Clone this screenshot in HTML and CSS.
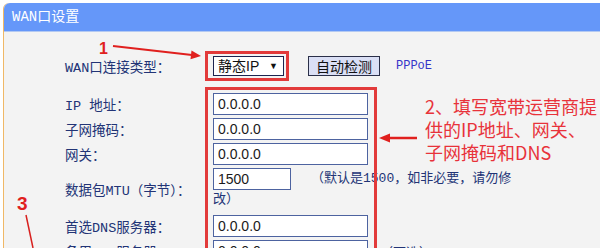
FILE: index.html
```html
<!DOCTYPE html>
<html lang="zh-CN">
<head>
    <meta charset="UTF-8">
    <title>WAN口设置</title>
    <link rel="stylesheet" href="styles.css">
</head>
<body>
    <div class="page">
        <div class="panel">
            <div class="panel-head">WAN口设置</div>
            <div class="panel-body">
                <div class="row row-type">
                    <label>WAN口连接类型：</label>
                    <div class="field">
                        <div class="select">静态IP<span class="caret">▼</span></div>
                        <button class="btn">自动检测</button>
                        <span class="link">PPPoE</span>
                    </div>
                </div>
                <div class="row">
                    <label>IP 地址：</label>
                    <div class="field"><input class="txt" value="0.0.0.0"></div>
                </div>
                <div class="row">
                    <label>子网掩码：</label>
                    <div class="field"><input class="txt" value="0.0.0.0"></div>
                </div>
                <div class="row">
                    <label>网关：</label>
                    <div class="field"><input class="txt" value="0.0.0.0"></div>
                </div>
                <div class="row row-mtu">
                    <label>数据包MTU（字节）：</label>
                    <div class="field-text">
                        <input class="txt short" value="1500"><span class="hint">（默认是1500，如非必要，请勿修改）</span>
                    </div>
                </div>
                <div class="row">
                    <label>首选DNS服务器：</label>
                    <div class="field"><input class="txt" value="0.0.0.0"></div>
                </div>
                <div class="row">
                    <label>备用DNS服务器：</label>
                    <div class="field"><input class="txt" value="0.0.0.0"><span class="hint opt">（可选）</span></div>
                </div>
            </div>
        </div>

        <!-- 标注层 -->
        <svg class="marks" width="600" height="248" viewBox="0 0 600 248">
            <rect x="206.5" y="52.5" width="81" height="27" fill="none" stroke="#e23a3a" stroke-width="3"/>
            <rect x="206.5" y="88.5" width="169" height="200" fill="none" stroke="#e23a3a" stroke-width="3"/>
            <line x1="113" y1="46" x2="192" y2="55" stroke="#e0201e" stroke-width="2"/>
            <polygon points="201,56 191.5,50.6 190.5,59.2" fill="#e0201e"/>
            <line x1="417" y1="138" x2="388" y2="138" stroke="#e0201e" stroke-width="2.5"/>
            <polygon points="379,138 390,133.5 390,142.5" fill="#e0201e"/>
            <line x1="26" y1="215" x2="33" y2="248" stroke="#d8201e" stroke-width="1.5"/>
        </svg>
        <div class="num num-1">1</div>
        <div class="num num-3">3</div>
        <div class="note">2、填写宽带运营商提供的IP地址、网关、子网掩码和DNS</div>
    </div>
</body>
</html>
```

FILE: styles.css
```css
body {
    margin: 0;
    background: #fff;
    font-family: "Liberation Mono", "Noto Sans CJK SC", monospace;
    font-size: 13px;
    color: #223476;
}
.page {
    position: relative;
    width: 600px;
    height: 248px;
    overflow: hidden;
    padding: 3px 0 0 3px;
    box-sizing: border-box;
}
.panel {
    height: 100%;
    background: #f3f3f3;
    border-left: 1px solid #f0b866;
    border-top-left-radius: 6px;
}
.panel-head {
    height: 28px;
    line-height: 28px;
    padding-left: 8px;
    background: #6597f9;
    color: #fff;
    font-size: 14px;
    border-top-left-radius: 6px;
    border-bottom: 1px solid #b3c9f2;
}
.panel-body {
    padding: 23px 0 0 61px;
}
.row {
    display: grid;
    grid-template-columns: 148px auto;
    align-items: center;
    min-height: 22px;
    margin-bottom: 3px;
}
.row label {
    font-size: 13.5px;
}
.row-type {
    margin-bottom: 16px;
}
.row-mtu {
    margin-bottom: 5px;
}
.field {
    display: flex;
    align-items: center;
}
.select {
    box-sizing: border-box;
    width: 71px;
    height: 20px;
    line-height: 18px;
    padding-left: 4px;
    border: 1px solid #1c2450;
    background: #fff;
    color: #111;
    font-family: "Liberation Sans", "Noto Sans CJK SC", sans-serif;
    font-size: 14px;
    position: relative;
}
.caret {
    position: absolute;
    right: 5px;
    top: 0;
    font-size: 9px;
}
.btn {
    margin-left: 24px;
    height: 20px;
    width: 72px;
    padding: 0;
    border: 1px solid #2a2f48;
    background: #dadff5;
    color: #111;
    font-family: "Noto Sans CJK SC", sans-serif;
    font-size: 14px;
    line-height: 18px;
}
.link {
    margin-left: 16px;
    color: #3434c8;
    font-size: 12px;
}
.txt {
    box-sizing: border-box;
    width: 155px;
    height: 22px;
    margin: 0;
    padding: 0 4px;
    border: 1px solid #4d63a0;
    background: #fff;
    color: #1a1a1a;
    font-family: "Liberation Sans", sans-serif;
    font-size: 14px;
}
.txt.short {
    width: 78px;
    vertical-align: middle;
}
.field-text {
    width: 312px;
    line-height: 20px;
}
.hint {
    margin-left: 20px;
    vertical-align: middle;
}
.hint.opt {
    margin-left: 12px;
}
.marks {
    position: absolute;
    left: 0;
    top: 0;
    pointer-events: none;
}
.num {
    position: absolute;
    color: #e0201e;
    font-family: "Liberation Sans", sans-serif;
    font-weight: bold;
}
.num-1 {
    left: 99px;
    top: 40px;
    font-size: 16px;
}
.num-3 {
    left: 17px;
    top: 193px;
    font-size: 19px;
}
.note {
    position: absolute;
    left: 425px;
    top: 95px;
    width: 176px;
    font-family: "Noto Sans CJK SC", sans-serif;
    font-size: 18px;
    line-height: 23px;
    color: #e8323a;
}
```
